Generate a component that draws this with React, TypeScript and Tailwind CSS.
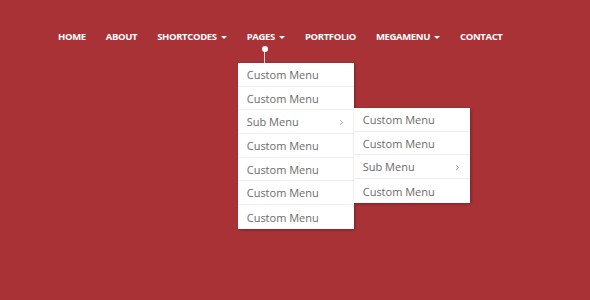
import { ChevronRight } from 'lucide-react';

const NAV = [
  { label: 'HOME' },
  { label: 'ABOUT' },
  { label: 'SHORTCODES', caret: true },
  { label: 'PAGES', caret: true, open: true },
  { label: 'PORTFOLIO' },
  { label: 'MEGAMENU', caret: true },
  { label: 'CONTACT' },
];

const MAIN_ITEMS = ['Custom Menu', 'Custom Menu', 'Sub Menu', 'Custom Menu', 'Custom Menu', 'Custom Menu', 'Custom Menu'];
const SUB_ITEMS = ['Custom Menu', 'Custom Menu', 'Sub Menu', 'Custom Menu'];

function Caret() {
  return <span className="ml-[4px] inline-block h-0 w-0 border-x-[3px] border-t-[3px] border-x-transparent border-t-white" />;
}

function MenuItem({ label, last }: { label: string; last: boolean }) {
  const sub = label === 'Sub Menu';
  return (
    <li
      className={`flex h-[23.67px] items-center justify-between pl-[9px] pr-[8px] pt-[2px] text-[11px] text-[#6b6b6b] ${
        last ? '' : 'border-b border-[#efefef]'
      }`}
    >
      <span>{label}</span>
      {sub && <ChevronRight size={9} strokeWidth={1.6} className="text-[#777]" />}
    </li>
  );
}

function Dropdown({ items }: { items: string[] }) {
  return (
    <ul className="w-[116px] bg-white shadow-[1px_1px_3px_rgba(0,0,0,0.3)]">
      {items.map((it, i) => (
        <MenuItem key={i} label={it} last={i === items.length - 1} />
      ))}
    </ul>
  );
}

export default function App() {
  return (
    <div className="relative h-[300px] w-full overflow-hidden bg-[#a93237]" style={{ fontFamily: '"Open Sans", sans-serif' }}>
      <ul className="flex gap-[20px] pl-[58px] pt-[31px]">
        {NAV.map(n => (
          <li key={n.label} className="relative">
            <span className="flex items-center text-[9.5px] font-bold leading-[12px] tracking-[-0.35px] text-white">
              {n.label}
              {n.caret && <Caret />}
            </span>
            {n.open && (
              <>
                {/* pin connecting the label to the dropdown */}
                <span className="absolute left-[15px] top-[15px] h-[6px] w-[6px] rounded-full bg-white" />
                <span className="absolute left-[17.5px] top-[19px] h-[13px] w-px bg-white/80" />
                <div className="absolute left-[-9px] top-[32px] z-10">
                  <Dropdown items={MAIN_ITEMS} />
                  <div className="absolute left-[116px] top-[45px]">
                    <Dropdown items={SUB_ITEMS} />
                  </div>
                </div>
              </>
            )}
          </li>
        ))}
      </ul>
    </div>
  );
}
